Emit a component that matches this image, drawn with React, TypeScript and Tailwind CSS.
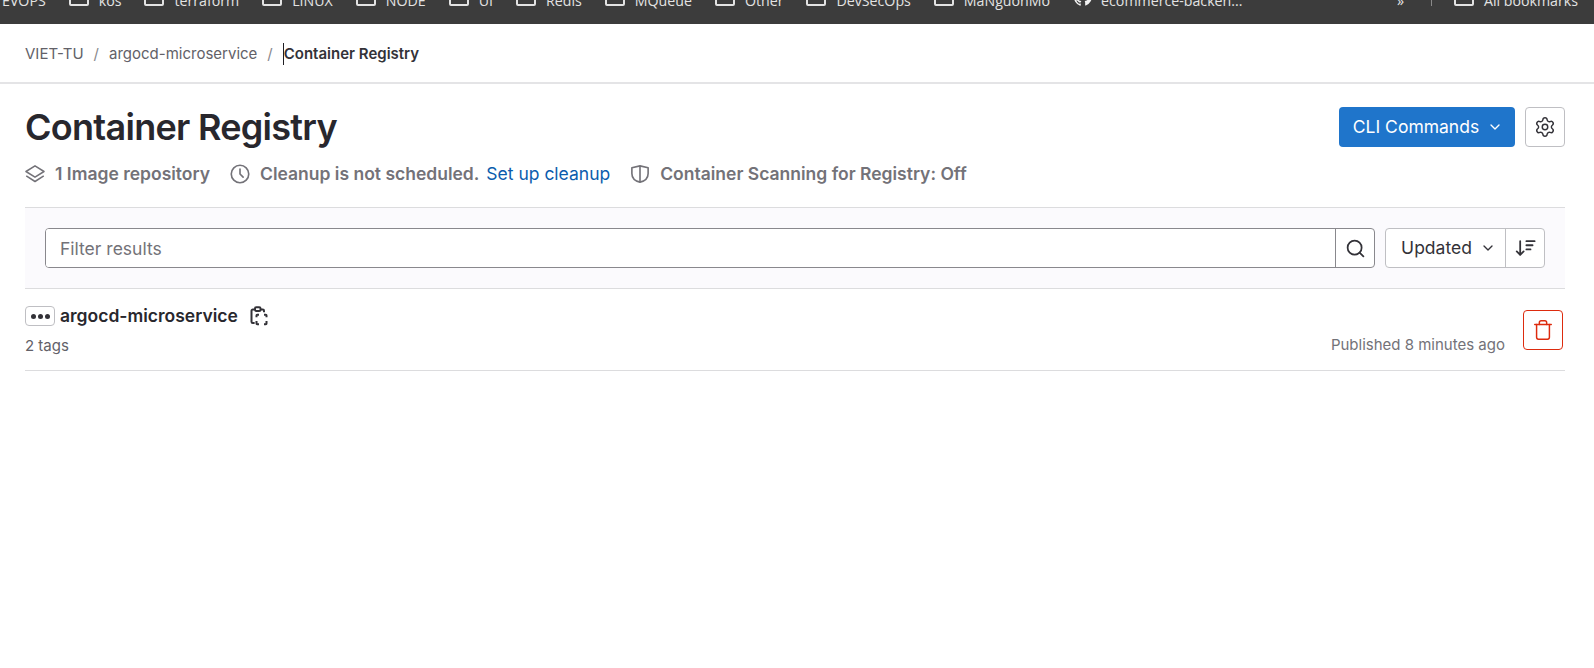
import { ChevronDown, Search, Settings, Trash } from "lucide-react";

const bookmarks = ["kos", "terraform", "LINUX", "NODE", "UI", "Redis", "MQueue", "Other", "DevSecOps", "MaNguonMo"];

function Folder() {
  return (
    <svg width="20" height="16" viewBox="0 0 20 16" fill="none" stroke="#e3e3e3" strokeWidth="2" className="mt-[-6px] shrink-0">
      <path d="M1 2h6l2 2h9a1 1 0 0 1 1 1v9a1 1 0 0 1-1 1H2a1 1 0 0 1-1-1V2z" />
    </svg>
  );
}

function BookmarkBar() {
  return (
    <div className="flex h-6 items-end overflow-hidden bg-[#3c3c3c] pb-[13px] font-['Open_Sans',sans-serif] text-[14.2px] leading-5 text-[#e3e3e3]">
      <div className="flex items-center">
        <span className="ml-[2px] mr-[23px]">EVOPS</span>
        {bookmarks.map((name) => (
          <div key={name} className="mr-[23px] flex items-center gap-[10px]">
            <Folder />
            <span>{name}</span>
          </div>
        ))}
        <div className="flex items-center gap-2">
          <svg width="20" height="20" viewBox="0 0 24 24" fill="#f2f2f2" className="mt-[-8px] shrink-0">
            <path d="M12 1a11 11 0 0 0-3.500 21.400c.6.1.8-.2.8-.5v-2c-3.100.7-3.700-1.300-3.700-1.300-.5-1.300-1.200-1.600-1.200-1.600-1-.7.1-.7.1-.7 1.100.1 1.700 1.100 1.700 1.100 1 1.700 2.600 1.200 3.200.9.1-.7.4-1.200.7-1.500-2.500-.3-5-1.200-5-5.400 0-1.200.4-2.200 1.100-3-.1-.3-.5-1.400.1-2.900 0 0 .9-.3 3 1.100a10 10 0 0 1 5.400 0c2.100-1.400 3-1.100 3-1.100.6 1.500.2 2.600.1 2.900.7.8 1.100 1.800 1.100 3 0 4.200-2.500 5.100-5 5.400.4.300.7 1 .7 2v3c0 .3.2.6.8.5A11 11 0 0 0 12 1z" />
          </svg>
          <span>ecommerce-backen...</span>
        </div>
      </div>
      <div className="ml-auto flex items-center">
        <span className="pr-[3px] tracking-[2px]">»</span>
        <div className="mx-[22px] mt-[-6px] h-4 w-px bg-[#8a8a8a]" />
        <div className="mr-4 flex items-center gap-[10px]">
          <Folder />
          <span>All bookmarks</span>
        </div>
      </div>
    </div>
  );
}

function Layers() {
  return (
    <svg width="20" height="20" viewBox="0 0 16 16" fill="none" stroke="#737278" strokeWidth="1.2" strokeLinejoin="round" className="shrink-0">
      <path d="M8 1.500.8 6 8 10.500 15.200 6 8 1.500z" />
      <path d="M1 9.500 8 14l7-4.500" />
    </svg>
  );
}

function Clock() {
  return (
    <svg width="20" height="20" viewBox="0 0 16 16" fill="none" stroke="#737278" strokeWidth="1.3" strokeLinecap="round" className="shrink-0">
      <circle cx="8" cy="8" r="7" />
      <path d="M8 4v4l2.500 2.500" />
    </svg>
  );
}

function Shield() {
  return (
    <svg width="20" height="20" viewBox="0 0 16 16" fill="none" stroke="#737278" strokeWidth="1.3" strokeLinejoin="round" className="shrink-0">
      <path d="M8 1.500 14.500 3v4.500c0 3.500-2.500 6-6.500 7-4-1-6.500-3.500-6.500-7V3L8 1.500z" />
      <path d="M8 1.500v13" />
    </svg>
  );
}

function SortIcon() {
  return (
    <svg width="22" height="22" viewBox="0 0 16 16" fill="none" stroke="#333238" strokeWidth="1.300" strokeLinecap="round" strokeLinejoin="round">
      <path d="M4.500 3v10M2 10.500 4.500 13 7 10.500" />
      <path d="M9 3h6M9 6h4.500M9 9h3" />
    </svg>
  );
}

function CopyIcon() {
  return (
    <svg width="20" height="20" viewBox="0 0 16 16" fill="none" stroke="#333238" strokeWidth="1.600">
      <path d="M4.500 2.800H3a1 1 0 0 0-1 1v8.700a1 1 0 0 0 1 1h1.500" />
      <path d="M9.500 2.800H11a1 1 0 0 1 1 1V5" />
      <rect x="4.800" y="1" width="4.400" height="3" rx="1" />
      <path d="M8 7H6.500a.5.5 0 0 0-.5.5V9M12 7h1.500a.5.5 0 0 1 .5.5V9M6 12v2a.5.5 0 0 0 .5.5H8M12 14.500h1.500a.5.5 0 0 0 .5-.5v-2" />
    </svg>
  );
}

export default function App() {
  return (
    <div className="min-h-[668px] bg-white font-['Inter',sans-serif] text-[#333238]">
      <BookmarkBar />

      <div className="flex h-[60px] items-center border-b-2 border-[#e4e4e6] pl-[25px] pt-[2px] text-[15px] text-[#626168]">
        <span>VIET-TU</span>
        <span className="mx-[10px] text-[#89888d]">/</span>
        <span>argocd-microservice</span>
        <span className="mx-[10px] text-[#89888d]">/</span>
        <span className="border-l border-[#1f1e24] font-semibold text-[#333238]">Container Registry</span>
      </div>

      <main className="ml-[25px] mr-[29px]">
        <div className="mt-[21px] flex items-start justify-between">
          <h1 className="text-4xl leading-[44px] font-semibold tracking-[-0.02em] text-[#28272d]">Container Registry</h1>
          <div className="mt-[2px] flex gap-[10px]">
            <button className="flex h-10 w-[176px] items-center justify-center gap-2 rounded bg-[#1f75cb] pl-[2px] text-[17.5px] text-white">
              CLI Commands
              <ChevronDown size={16} strokeWidth={2} />
            </button>
            <button className="flex h-10 w-10 items-center justify-center rounded border border-[#bfbfc3] text-[#333238]">
              <Settings size={22} strokeWidth={1.6} />
            </button>
          </div>
        </div>

        <div className="mt-[13px] flex h-6 items-center text-[17.5px] font-semibold text-[#737278]">
          <Layers />
          <span className="ml-[10px]">1 Image repository</span>
          <div className="ml-5"><Clock /></div>
          <span className="ml-[10px]">Cleanup is not scheduled.</span>
          <a className="ml-[7px] font-normal text-[#0b5cad]">Set up cleanup</a>
          <div className="ml-5"><Shield /></div>
          <span className="ml-[10px]">Container Scanning for Registry: Off</span>
        </div>

        <div className="mt-[21px] flex h-[82px] items-center gap-[10px] border-y border-[#dcdcde] bg-[#fbfafd] px-5">
          <div className="flex h-10 flex-1 overflow-hidden rounded border border-[#89888d] bg-white">
            <input
              placeholder="Filter results"
              className="min-w-0 flex-1 bg-white px-[14px] pt-[2px] text-[17.5px] outline-none placeholder:text-[#737278]"
            />
            <div className="flex w-[39px] items-center justify-center border-l border-[#89888d]">
              <Search size={21} strokeWidth={2} />
            </div>
          </div>
          <div className="flex h-10 w-[160px] rounded border border-[#bfbfc3] bg-white">
            <div className="flex flex-1 items-center justify-center gap-2 pl-[6px] text-[17.5px]">
              Updated
              <ChevronDown size={16} strokeWidth={2} />
            </div>
            <div className="flex w-[39px] items-center justify-center border-l border-[#bfbfc3]">
              <SortIcon />
            </div>
          </div>
        </div>

        <div className="flex h-[82px] items-center justify-between border-b border-[#dcdcde] pt-[2px]">
          <div>
            <div className="flex items-center">
              <div className="flex h-5 w-[30px] items-center justify-center gap-[2px] rounded border border-[#bfbfc3]">
                <span className="h-[5px] w-[5px] rounded-full bg-[#333238]" />
                <span className="h-[5px] w-[5px] rounded-full bg-[#333238]" />
                <span className="h-[5px] w-[5px] rounded-full bg-[#333238]" />
              </div>
              <span className="ml-[5px] text-[17.5px] font-semibold text-[#28272d]">argocd-microservice</span>
              <div className="ml-[11px]"><CopyIcon /></div>
            </div>
            <div className="mt-[6px] text-[15px] text-[#626168]">2 tags</div>
          </div>
          <div className="flex items-center">
            <span className="mt-[30px] text-[15px] text-[#737278]">Published 8 minutes ago</span>
            <button className="mb-[2px] ml-[18px] mr-[2px] flex h-10 w-10 items-center justify-center rounded border border-[#dd2b0e] text-[#dd2b0e]">
              <Trash size={22} strokeWidth={1.6} />
            </button>
          </div>
        </div>
      </main>
    </div>
  );
}
